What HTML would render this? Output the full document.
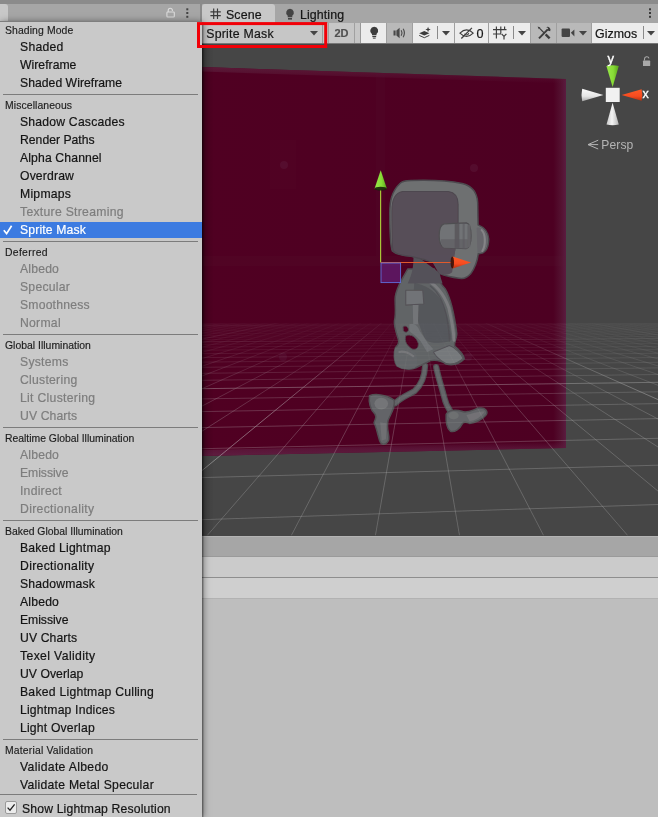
<!DOCTYPE html>
<html><head><meta charset="utf-8"><title>Scene View Draw Mode</title>
<style>
html,body{margin:0;padding:0}
body{width:658px;height:817px;overflow:hidden;position:relative;background:#bebebe;font-family:"Liberation Sans",sans-serif;font-size:12px;color:#111}
div,svg{position:absolute}
.topstrip{left:0;top:0;width:658px;height:4px;background:#8b8b8b}
.tabbar{left:0;top:4px;width:658px;height:19px;background:#a6a6a6}
.ltab{left:0;top:4px;width:8px;height:18px;background:#c8c8c8;border-radius:0 3px 0 0}
.psep{left:200px;top:0;width:2px;height:22px;background:#8b8b8b}
.stab{left:202px;top:4px;width:73px;height:19px;background:#c8c8c8;border-radius:3px 3px 0 0}
.tabtxt{-webkit-text-stroke:.2px;top:5px;font-size:12.4px;line-height:16px;letter-spacing:.1px;color:#151515;white-space:nowrap}
.toolbar{left:202px;top:23px;width:456px;height:21px;background:#c6c6c6;border-bottom:1px solid #777;box-sizing:border-box}
.btn{top:23px;height:20px;box-sizing:border-box;border-right:1px solid #a0a0a0}
.on{background:#ececec}.off{background:#b9b9b9}.nm{background:#c6c6c6}
.scene{left:202px;top:44px;width:456px;height:492px;background:#464646}
.b1{left:202px;top:536px;width:456px;height:21px;background:#a6a6a6;border-top:1px solid #b4b4b4;border-bottom:1px solid #9a9a9a;box-sizing:border-box}
.b2{left:202px;top:557px;width:456px;height:20px;background:#cbcbcb;border-bottom:1px solid #8e8e8e}
.b3{left:202px;top:578px;width:456px;height:21px;background:#cfcfcf;border-bottom:1px solid #b2b2b2;box-sizing:border-box}
.menu{left:0;top:21px;width:202px;height:796px;background:#c9c9c9;box-shadow:1px 1px 7px rgba(0,0,0,.5);border-top:1px solid #7e7e7e;box-sizing:border-box}
.hd{-webkit-text-stroke:.15px;left:5px;height:15px;line-height:18px;font-size:10.4px;letter-spacing:.05px;color:#1c1c1c;white-space:nowrap}
.it{-webkit-text-stroke:.2px;left:20px;height:18px;line-height:21px;font-size:12.2px;letter-spacing:.15px;color:#141414;white-space:nowrap}
.dis{color:#7d7d7d}
.sel{color:#fff}
.hl{left:0;width:202px;height:16px;background:#3c7be1}
.ck{left:3px}
.sep{left:3px;width:195px;height:1px;background:#7c7c7c}
.cb{left:5px;width:12px;height:13px;background:#ececec;border:1px solid #9a9a9a;border-radius:2px;box-sizing:border-box}
.cb svg{left:-1px;top:-1px}
.mj{stroke-opacity:.7}
.red{left:197px;top:21.5px;width:130.5px;height:26.5px;border:3px solid #f10008;box-sizing:border-box}
</style></head>
<body><div id="root" style="left:0;top:0;width:658px;height:817px;will-change:transform">
<div class="topstrip"></div>
<div class="tabbar"></div>
<div class="ltab"></div>
<div class="psep"></div>
<!-- left panel lock + dots -->
<svg style="left:165px;top:7px" width="30" height="12" viewBox="0 0 30 12">
 <path d="M3.2 5 V3.4 a2.1 2.1 0 0 1 4.2 0 V3.9" fill="none" stroke="#dcdcdc" stroke-width="1.1"/>
 <rect x="1.9" y="5" width="7.4" height="5" rx=".8" fill="none" stroke="#dcdcdc" stroke-width="1.1"/>
 <rect x="21.300" y="1.300" width="2" height="2" fill="#444"/><rect x="21.300" y="5" width="2" height="2" fill="#444"/><rect x="21.300" y="8.800" width="2" height="2" fill="#444"/>
</svg>
<div class="stab"></div>
<svg style="left:209px;top:7px" width="14" height="14" viewBox="209 7 14 14"><path d="M210.4 11.800 H220.8 M210.4 15.600 H220.8 M213.700 8.500 V18.900 M217.500 8.500 V18.900" stroke="#3a3a3a" stroke-width="1.15" fill="none"/></svg>
<div class="tabtxt" style="left:226px;top:7px">Scene</div>
<svg style="left:285px;top:8px" width="10" height="13" viewBox="0 0 10 13"><path d="M5 .8 a3.9 3.9 0 0 1 2.3 7 V9.3 H2.7 V7.8 A3.9 3.9 0 0 1 5 .8 Z" fill="#444"/><rect x="3" y="10" width="4" height="1.6" fill="#444"/></svg>
<div class="tabtxt" style="left:300px;top:7px">Lighting</div>
<svg style="left:647px;top:7px" width="6" height="12" viewBox="0 0 6 12"><rect x="2" y="1.300" width="2" height="2" fill="#3a3a3a"/><rect x="2" y="5" width="2" height="2" fill="#3a3a3a"/><rect x="2" y="8.800" width="2" height="2" fill="#3a3a3a"/></svg>

<div class="toolbar"></div>
<!-- draw mode dropdown -->
<div class="btn nm" style="left:202px;width:125px"></div>
<div class="tabtxt" style="left:206.2px;top:26px;font-size:12.3px;letter-spacing:.25px">Sprite Mask</div>
<svg style="left:309px;top:30px" width="10" height="7" viewBox="0 0 10 7"><path d="M1 1 H9 L5 5.6 Z" fill="#444"/></svg>
<div style="left:322px;top:24px;width:1px;height:19px;background:#9c9c9c"></div>
<div class="btn nm" style="left:328px;width:27px;border-left:1px solid #a0a0a0"></div>
<div class="tabtxt" style="left:334.500px;top:25px;font-size:11px;font-weight:bold;color:#505050;letter-spacing:0">2D</div>
<div class="btn nm" style="left:355px;width:6px;border-right:1px solid #999"></div>
<div class="btn on" style="left:361px;width:26px"></div>
<svg style="left:368.500px;top:26px" width="10.5" height="14" viewBox="0 0 12 16"><path d="M6 1 a4.4 4.4 0 0 1 2.6 8 V10.6 H3.4 V9 A4.4 4.4 0 0 1 6 1 Z" fill="#3c3c3c"/><rect x="3.8" y="11.4" width="4.4" height="1.3" fill="#3c3c3c"/><rect x="4.4" y="13.3" width="3.2" height="1.1" fill="#3c3c3c"/></svg>
<div class="btn off" style="left:387px;width:26px"></div>
<svg style="left:392px;top:26px" width="16" height="14" viewBox="0 0 16 14"><path d="M1.5 4.6 H3.6 V9.4 H1.5 Z M4.4 4.4 L7.6 1.8 V12.2 L4.4 9.6 Z" fill="#484848"/><path d="M9.2 4.3 Q10.8 7 9.2 9.7 M11.2 2.8 Q13.6 7 11.2 11.2" fill="none" stroke="#505050" stroke-width="1.2"/></svg>
<div class="btn on" style="left:413px;width:42px"></div>
<svg style="left:418px;top:26px" width="14.6" height="13" viewBox="0 0 18 16"><path d="M1.5 8.8 L7.8 6 L14 8.8 L7.8 11.6 Z" fill="#3c3c3c"/><path d="M1.5 11.6 L7.8 14.4 L14 11.6" fill="none" stroke="#3c3c3c" stroke-width="1.2"/><path d="M12.4 1 L13.3 3.5 L15.8 4.4 L13.3 5.3 L12.4 7.8 L11.5 5.3 L9 4.4 L11.5 3.5 Z" fill="#3c3c3c"/></svg>
<div style="left:437px;top:26px;width:1px;height:13px;background:#8a8a8a"></div>
<svg style="left:440.500px;top:30px" width="10" height="7" viewBox="0 0 10 7"><path d="M1 1 H9 L5 5.6 Z" fill="#444"/></svg>
<div class="btn on" style="left:455px;width:34px"></div>
<svg style="left:459px;top:27px" width="16" height="12.400" viewBox="0 0 18 14"><path d="M1 7 Q8.5 -0.5 16 7 Q8.5 14.5 1 7 Z" fill="none" stroke="#3c3c3c" stroke-width="1.25"/><path d="M6.2 7.6 A2.6 2.6 0 0 0 11 7" fill="none" stroke="#3c3c3c" stroke-width="1.2"/><path d="M2.6 13 L14.6 1" stroke="#3c3c3c" stroke-width="1.4"/></svg>
<div class="tabtxt" style="left:476.500px;top:26px;font-size:12.6px">0</div>
<div class="btn on" style="left:489px;width:42px"></div>
<svg style="left:492px;top:25px" width="17" height="16" viewBox="0 0 17 16"><path d="M1 4.6 H14.5 M1 9 H9 M4.4 1.5 V13.5 M8.8 1.5 V8.5 M12.6 1.5 V5" stroke="#3c3c3c" stroke-width="1.15" fill="none"/><path d="M9.6 8.8 L12 11.4 L14.4 8.8 M12 11.4 V14.6" stroke="#3c3c3c" stroke-width="1.2" fill="none"/></svg>
<div style="left:513px;top:26px;width:1px;height:13px;background:#8a8a8a"></div>
<svg style="left:516.500px;top:30px" width="10" height="7" viewBox="0 0 10 7"><path d="M1 1 H9 L5 5.6 Z" fill="#444"/></svg>
<div class="btn off" style="left:531px;width:26px"></div>
<svg style="left:536px;top:25px" width="17" height="16" viewBox="0 0 17 16"><path d="M3 13.4 L11.8 4.4" stroke="#3c3c3c" stroke-width="2"/><path d="M10.2 2.200 a3 3 0 0 1 4 4 l-1.800 -0.400 l-0.900 -0.900 l0.600 -1.900 Z" fill="#3c3c3c"/><path d="M3.400 3.200 L8.200 8" stroke="#3c3c3c" stroke-width="1.1"/><path d="M9.600 9.400 L13.600 13.400" stroke="#3c3c3c" stroke-width="2.3"/><path d="M1.600 1.400 L4.400 2.600 L2.800 4.200 Z" fill="#3c3c3c"/></svg>
<div class="btn off" style="left:557px;width:35px"></div>
<svg style="left:561px;top:27px" width="15" height="12" viewBox="0 0 15 12"><rect x=".6" y="1.6" width="8.4" height="8.4" rx="1" fill="#444"/><path d="M9.8 5.8 L13.4 2.4 V9.4 Z" fill="#444"/></svg>
<svg style="left:578px;top:30px" width="10" height="7" viewBox="0 0 10 7"><path d="M1 1 H9 L5 5.6 Z" fill="#444"/></svg>
<div class="btn on" style="left:592px;width:66px;border-right:0"></div>
<div class="tabtxt" style="left:595px;top:26px;font-size:12.4px;letter-spacing:.05px">Gizmos</div>
<div style="left:643px;top:26px;width:1px;height:13px;background:#8a8a8a"></div>
<svg style="left:646px;top:30px" width="10" height="7" viewBox="0 0 10 7"><path d="M1 1 H9 L5 5.6 Z" fill="#444"/></svg>

<div class="scene"></div>
<svg style="left:0;top:0" width="658" height="817" viewBox="0 0 658 817">
<defs>
 <clipPath id="sc"><rect x="202" y="44" width="456" height="491.5"/></clipPath>
 <linearGradient id="gfade" x1="0" y1="322.5" x2="0" y2="422.5" gradientUnits="userSpaceOnUse">
  <stop offset="0" stop-color="#fff" stop-opacity="0"/><stop offset=".015" stop-color="#fff" stop-opacity=".15"/><stop offset=".22" stop-color="#fff" stop-opacity=".25"/><stop offset=".6" stop-color="#fff" stop-opacity=".7"/><stop offset="1" stop-color="#fff" stop-opacity="1"/>
 </linearGradient>
 <mask id="gm" maskUnits="userSpaceOnUse" x="202" y="44" width="456" height="492"><rect x="202" y="300" width="456" height="236" fill="url(#gfade)"/></mask>
 <linearGradient id="qedge" x1="0" y1="0" x2="1" y2="0"><stop offset="0" stop-color="#500022"/><stop offset=".965" stop-color="#4d0022"/><stop offset=".985" stop-color="#53102f"/><stop offset="1" stop-color="#5a1c40"/></linearGradient>
 <linearGradient id="qtop" x1="0" y1="0" x2="0" y2="1"><stop offset="0" stop-color="#5a1a38" stop-opacity="1"/><stop offset="1" stop-color="#5a1a38" stop-opacity="0"/></linearGradient>
 <linearGradient id="qbot" x1="0" y1="0" x2="0" y2="1"><stop offset="0" stop-color="#5e1d40" stop-opacity="0"/><stop offset=".5" stop-color="#5e1d40" stop-opacity=".7"/><stop offset="1" stop-color="#5e1d40" stop-opacity="1"/></linearGradient>
 <linearGradient id="lsh" x1="202" y1="0" x2="214" y2="0" gradientUnits="userSpaceOnUse"><stop offset="0" stop-color="#000" stop-opacity=".22"/><stop offset=".3" stop-color="#000" stop-opacity=".08"/><stop offset="1" stop-color="#000" stop-opacity="0"/></linearGradient>
 <filter id="bl" x="-10%" y="-10%" width="120%" height="120%"><feGaussianBlur stdDeviation=".7"/></filter>
 <filter id="bl2" x="-10%" y="-10%" width="120%" height="120%"><feGaussianBlur stdDeviation=".9"/></filter>
 <linearGradient id="cw" x1="0" y1="0" x2="0" y2="1"><stop offset="0" stop-color="#fafafa"/><stop offset=".6" stop-color="#e6e6e6"/><stop offset="1" stop-color="#a8a8a8"/></linearGradient>
 <linearGradient id="cw2" x1="0" y1="0" x2="1" y2="0"><stop offset="0" stop-color="#c8c8c8"/><stop offset=".45" stop-color="#f4f4f4"/><stop offset="1" stop-color="#b4b4b4"/></linearGradient>
 <linearGradient id="cg" x1="0" y1="0" x2="1" y2="0"><stop offset="0" stop-color="#98e84a"/><stop offset=".55" stop-color="#88dc36"/><stop offset="1" stop-color="#5aa61c"/></linearGradient>
 <linearGradient id="cr" x1="0" y1="0" x2="0" y2="1"><stop offset="0" stop-color="#ff5a26"/><stop offset=".6" stop-color="#f64c20"/><stop offset="1" stop-color="#b83010"/></linearGradient>
</defs>
<g clip-path="url(#sc)">
 <!-- sprite mask quad -->
 <polygon points="202,67 566,79 566,448 202,456" fill="url(#qedge)"/>
 <polygon points="202,67 566,79 566,83.5 202,71.5" fill="url(#qtop)"/>
 <polygon points="202,450 566,442 566,448 202,456" fill="url(#qbot)"/>
 <!-- faint ghost marks -->
 <rect x="376" y="74" width="9" height="182" fill="#5d1f3c" opacity=".1"/>
 
 <rect x="202" y="256" width="364" height="10" fill="#5d1f3c" opacity=".12"/>
 <rect x="270" y="140" width="26" height="49" fill="#5d1f3c" opacity=".07"/>
 <circle cx="284" cy="165" r="4" fill="#64284a" opacity=".3"/><circle cx="474" cy="168" r="4" fill="#64284a" opacity=".3"/>
 <circle cx="283" cy="357" r="4" fill="#64284a" opacity=".25"/><circle cx="468" cy="357" r="4" fill="#64284a" opacity=".25"/>
 <!-- grid (under robot) -->
 <g mask="url(#gm)" opacity=".7"><g id="gridg" stroke="#c8c8c8" stroke-opacity=".37" stroke-width=".75" fill="none" class="grid">
 <line x1="206.7" y1="307.0" x2="202.0" y2="307.3" class="mj"/><line x1="211.6" y1="307.0" x2="202.0" y2="307.7"/><line x1="216.4" y1="307.0" x2="202.0" y2="308.0"/><line x1="221.3" y1="307.0" x2="202.0" y2="308.4"/><line x1="226.2" y1="307.0" x2="202.0" y2="308.8"/><line x1="231.0" y1="307.0" x2="202.0" y2="309.2"/><line x1="235.9" y1="307.0" x2="202.0" y2="309.6"/><line x1="240.7" y1="307.0" x2="202.0" y2="310.1"/><line x1="245.6" y1="307.0" x2="202.0" y2="310.5"/><line x1="250.4" y1="307.0" x2="202.0" y2="311.0"/><line x1="255.3" y1="307.0" x2="202.0" y2="311.6" class="mj"/><line x1="260.1" y1="307.0" x2="202.0" y2="312.2"/><line x1="265.0" y1="307.0" x2="202.0" y2="312.8"/><line x1="269.9" y1="307.0" x2="202.0" y2="313.4"/><line x1="274.7" y1="307.0" x2="202.0" y2="314.1"/><line x1="279.6" y1="307.0" x2="202.0" y2="314.8"/><line x1="284.4" y1="307.0" x2="202.0" y2="315.6"/><line x1="289.3" y1="307.0" x2="202.0" y2="316.5"/><line x1="294.1" y1="307.0" x2="202.0" y2="317.4"/><line x1="299.0" y1="307.0" x2="202.0" y2="318.4"/><line x1="303.9" y1="307.0" x2="202.0" y2="319.5" class="mj"/><line x1="308.7" y1="307.0" x2="202.0" y2="320.7"/><line x1="313.6" y1="307.0" x2="202.0" y2="322.0"/><line x1="318.4" y1="307.0" x2="202.0" y2="323.4"/><line x1="323.3" y1="307.0" x2="202.0" y2="324.9"/><line x1="328.1" y1="307.0" x2="202.0" y2="326.6"/><line x1="333.0" y1="307.0" x2="202.0" y2="328.6"/><line x1="337.8" y1="307.0" x2="202.0" y2="330.7"/><line x1="342.7" y1="307.0" x2="202.0" y2="333.2"/><line x1="347.6" y1="307.0" x2="202.0" y2="335.9"/><line x1="352.4" y1="307.0" x2="202.0" y2="339.1" class="mj"/><line x1="357.3" y1="307.0" x2="202.0" y2="342.8"/><line x1="362.1" y1="307.0" x2="202.0" y2="347.1"/><line x1="367.0" y1="307.0" x2="202.0" y2="352.3"/><line x1="371.8" y1="307.0" x2="202.0" y2="358.5"/><line x1="376.7" y1="307.0" x2="202.0" y2="366.2"/><line x1="381.5" y1="307.0" x2="202.0" y2="376.0"/><line x1="386.4" y1="307.0" x2="202.0" y2="388.7"/><line x1="391.3" y1="307.0" x2="202.0" y2="406.1"/><line x1="396.1" y1="307.0" x2="202.0" y2="431.2"/><line x1="401.0" y1="307.0" x2="202.0" y2="470.6" class="mj"/><line x1="405.8" y1="307.0" x2="207.2" y2="535.5"/><line x1="410.7" y1="307.0" x2="291.3" y2="535.5"/><line x1="415.5" y1="307.0" x2="375.4" y2="535.5"/><line x1="420.4" y1="307.0" x2="459.5" y2="535.5"/><line x1="425.3" y1="307.0" x2="543.6" y2="535.5"/><line x1="430.1" y1="307.0" x2="627.7" y2="535.5"/><line x1="435.0" y1="307.0" x2="658.0" y2="491.1"/><line x1="439.8" y1="307.0" x2="658.0" y2="447.0"/><line x1="444.7" y1="307.0" x2="658.0" y2="419.0"/><line x1="449.5" y1="307.0" x2="658.0" y2="399.6" class="mj"/><line x1="454.4" y1="307.0" x2="658.0" y2="385.3"/><line x1="459.2" y1="307.0" x2="658.0" y2="374.5"/><line x1="464.1" y1="307.0" x2="658.0" y2="365.9"/><line x1="469.0" y1="307.0" x2="658.0" y2="358.9"/><line x1="473.8" y1="307.0" x2="658.0" y2="353.2"/><line x1="478.7" y1="307.0" x2="658.0" y2="348.4"/><line x1="483.5" y1="307.0" x2="658.0" y2="344.3"/><line x1="488.4" y1="307.0" x2="658.0" y2="340.7"/><line x1="493.2" y1="307.0" x2="658.0" y2="337.7"/><line x1="498.1" y1="307.0" x2="658.0" y2="335.0" class="mj"/><line x1="502.9" y1="307.0" x2="658.0" y2="332.6"/><line x1="507.8" y1="307.0" x2="658.0" y2="330.4"/><line x1="512.7" y1="307.0" x2="658.0" y2="328.5"/><line x1="517.5" y1="307.0" x2="658.0" y2="326.8"/><line x1="522.4" y1="307.0" x2="658.0" y2="325.2"/><line x1="527.2" y1="307.0" x2="658.0" y2="323.8"/><line x1="532.1" y1="307.0" x2="658.0" y2="322.5"/><line x1="536.9" y1="307.0" x2="658.0" y2="321.2"/><line x1="541.8" y1="307.0" x2="658.0" y2="320.1"/><line x1="546.7" y1="307.0" x2="658.0" y2="319.1" class="mj"/><line x1="551.5" y1="307.0" x2="658.0" y2="318.2"/><line x1="556.4" y1="307.0" x2="658.0" y2="317.3"/><line x1="561.2" y1="307.0" x2="658.0" y2="316.5"/><line x1="566.1" y1="307.0" x2="658.0" y2="315.7"/><line x1="570.9" y1="307.0" x2="658.0" y2="315.0"/><line x1="575.8" y1="307.0" x2="658.0" y2="314.3"/><line x1="580.6" y1="307.0" x2="658.0" y2="313.7"/><line x1="585.5" y1="307.0" x2="658.0" y2="313.1"/><line x1="590.4" y1="307.0" x2="658.0" y2="312.5"/><line x1="595.2" y1="307.0" x2="658.0" y2="312.0" class="mj"/><line x1="600.1" y1="307.0" x2="658.0" y2="311.5"/><line x1="604.9" y1="307.0" x2="658.0" y2="311.0"/><line x1="609.8" y1="307.0" x2="658.0" y2="310.5"/><line x1="614.6" y1="307.0" x2="658.0" y2="310.1"/><line x1="619.5" y1="307.0" x2="658.0" y2="309.7"/><line x1="624.3" y1="307.0" x2="658.0" y2="309.3"/><line x1="629.2" y1="307.0" x2="658.0" y2="308.9"/><line x1="634.1" y1="307.0" x2="658.0" y2="308.6"/><line x1="638.9" y1="307.0" x2="658.0" y2="308.2"/><line x1="643.8" y1="307.0" x2="658.0" y2="307.9" class="mj"/><line x1="648.6" y1="307.0" x2="658.0" y2="307.6"/><line x1="653.5" y1="307.0" x2="658.0" y2="307.3"/><line x1="202.0" y1="519.7" x2="658.0" y2="504.5"/><line x1="202.0" y1="477.6" x2="658.0" y2="465.2"/><line x1="202.0" y1="448.7" x2="658.0" y2="438.3"/><line x1="202.0" y1="427.6" x2="658.0" y2="418.6"/><line x1="202.0" y1="411.6" x2="658.0" y2="403.6"/><line x1="202.0" y1="398.9" x2="658.0" y2="391.8"/><line x1="202.0" y1="388.7" x2="658.0" y2="382.3" class="mj"/><line x1="202.0" y1="380.3" x2="658.0" y2="374.5"/><line x1="202.0" y1="373.3" x2="658.0" y2="367.9"/><line x1="202.0" y1="367.3" x2="658.0" y2="362.3"/><line x1="202.0" y1="362.1" x2="658.0" y2="357.5"/><line x1="202.0" y1="357.6" x2="658.0" y2="353.3"/><line x1="202.0" y1="353.7" x2="658.0" y2="349.6"/><line x1="202.0" y1="350.2" x2="658.0" y2="346.4"/><line x1="202.0" y1="347.1" x2="658.0" y2="343.5"/><line x1="202.0" y1="344.3" x2="658.0" y2="340.9"/><line x1="202.0" y1="341.8" x2="658.0" y2="338.5" class="mj"/><line x1="202.0" y1="339.5" x2="658.0" y2="336.4"/><line x1="202.0" y1="337.4" x2="658.0" y2="334.4"/><line x1="202.0" y1="335.5" x2="658.0" y2="332.7"/><line x1="202.0" y1="333.8" x2="658.0" y2="331.0"/><line x1="202.0" y1="332.2" x2="658.0" y2="329.5"/><line x1="202.0" y1="330.7" x2="658.0" y2="328.2"/><line x1="202.0" y1="329.3" x2="658.0" y2="326.9"/><line x1="202.0" y1="328.0" x2="658.0" y2="325.7"/><line x1="202.0" y1="326.8" x2="658.0" y2="324.6"/><line x1="202.0" y1="325.7" x2="658.0" y2="323.5" class="mj"/><line x1="202.0" y1="324.7" x2="658.0" y2="322.6"/><line x1="202.0" y1="323.7" x2="658.0" y2="321.6"/><line x1="202.0" y1="322.8" x2="658.0" y2="320.8"/><line x1="202.0" y1="321.9" x2="658.0" y2="320.0"/><line x1="202.0" y1="321.1" x2="658.0" y2="319.2"/><line x1="202.0" y1="320.3" x2="658.0" y2="318.5"/><line x1="202.0" y1="319.6" x2="658.0" y2="317.8"/><line x1="202.0" y1="318.9" x2="658.0" y2="317.2"/><line x1="202.0" y1="318.2" x2="658.0" y2="316.6"/><line x1="202.0" y1="317.6" x2="658.0" y2="316.0" class="mj"/><line x1="202.0" y1="317.0" x2="658.0" y2="315.4"/><line x1="202.0" y1="316.5" x2="658.0" y2="314.9"/><line x1="202.0" y1="315.9" x2="658.0" y2="314.4"/><line x1="202.0" y1="315.4" x2="658.0" y2="313.9"/><line x1="202.0" y1="314.9" x2="658.0" y2="313.4"/><line x1="202.0" y1="314.4" x2="658.0" y2="313.0"/><line x1="202.0" y1="314.0" x2="658.0" y2="312.6"/><line x1="202.0" y1="313.6" x2="658.0" y2="312.2"/><line x1="202.0" y1="313.1" x2="658.0" y2="311.8"/><line x1="202.0" y1="312.7" x2="658.0" y2="311.4" class="mj"/><line x1="202.0" y1="312.4" x2="658.0" y2="311.1"/><line x1="202.0" y1="312.0" x2="658.0" y2="310.7"/><line x1="202.0" y1="311.6" x2="658.0" y2="310.4"/><line x1="202.0" y1="311.3" x2="658.0" y2="310.1"/><line x1="202.0" y1="311.0" x2="658.0" y2="309.7"/><line x1="202.0" y1="310.6" x2="658.0" y2="309.5"/><line x1="202.0" y1="310.3" x2="658.0" y2="309.2"/><line x1="202.0" y1="310.0" x2="658.0" y2="308.9"/><line x1="202.0" y1="309.7" x2="658.0" y2="308.6"/><line x1="202.0" y1="309.5" x2="658.0" y2="308.4" class="mj"/><line x1="202.0" y1="309.2" x2="658.0" y2="308.1"/><line x1="202.0" y1="308.9" x2="658.0" y2="307.9"/><line x1="202.0" y1="308.7" x2="658.0" y2="307.6"/>
 </g></g>
 <g filter="url(#bl)" opacity=".95" stroke-linejoin="round" stroke-linecap="round">
 <!-- legs & feet: coords from zoom [360,350,500,460] -->
 <g transform="translate(360,350) scale(0.21277)">
  <path d="M306,75 C304,120 292,160 258,192 C225,212 192,222 166,250" fill="none" stroke="#525457" stroke-width="29"/>
  <path d="M306,75 C304,120 292,160 258,192 C225,212 192,222 166,250" fill="none" stroke="#656b6c" stroke-width="18"/>
  <path d="M358,80 C368,130 384,175 396,222 C402,252 414,272 426,290" fill="none" stroke="#525457" stroke-width="29"/>
  <path d="M358,80 C368,130 384,175 396,222 C402,252 414,272 426,290" fill="none" stroke="#656b6c" stroke-width="18"/>
  <path d="M45,215 C70,205 120,208 160,235 C168,262 150,290 132,330 C122,370 140,400 135,422 C125,448 100,450 92,425 C82,395 78,365 66,342 C70,325 82,318 70,300 C48,280 40,245 45,215 Z" fill="#656b6c" stroke="#525457" stroke-width="7"/>
  <path d="M405,302 C415,282 450,278 478,288 C505,300 535,278 560,273 C590,268 604,290 592,306 C575,328 540,342 515,345 C500,338 490,335 482,345 C470,370 445,388 425,382 C410,370 403,335 405,302 Z" fill="#656b6c" stroke="#525457" stroke-width="7"/>
  <ellipse cx="100" cy="252" rx="32" ry="28" fill="#7f8385" opacity=".7"/>
  <path d="M95,340 L125,345 L122,420 L102,425 Z" fill="#777a7d" opacity=".7"/>
  <ellipse cx="440" cy="308" rx="24" ry="18" fill="#737a7b" opacity=".7"/>
  <path d="M500,305 C530,300 560,285 585,290 C570,315 540,330 515,335 Z" fill="#7a7d80" opacity=".7"/>
 </g>
 <!-- torso: coords from zoom [360,270,500,410] -->
 <g transform="translate(360,270) scale(0.21277)">
  <path d="M225,-5 L350,-5 C352,25 365,50 400,88 C430,140 445,220 455,300 C452,330 440,345 445,358 C468,378 488,400 490,418 C470,438 440,450 405,442 C385,428 360,420 330,426 C310,440 285,445 262,460 C240,470 200,468 175,452 C158,430 158,390 166,366 C180,352 186,340 180,325 C172,300 158,260 162,238 C172,200 162,150 166,125 C172,85 195,50 205,30 Z" fill="#636a6b" stroke="#525457" stroke-width="7"/>
  <path d="M255,60 C300,70 345,90 380,140 C410,200 425,260 430,330 C400,345 340,350 310,330 C280,280 260,200 250,140 Z" fill="#575c5e"/>
  <path d="M300,40 C350,60 395,110 418,180 C432,240 440,290 442,330" fill="none" stroke="#84888a" stroke-width="14" opacity=".8"/>
  <path d="M330,75 C365,100 392,150 405,210 C415,260 420,300 420,335" fill="none" stroke="#4f5155" stroke-width="5" opacity=".7"/>
  <path d="M215,95 L295,95 L300,160 L215,165 Z" fill="#737a7b" stroke="#55575a" stroke-width="5"/>
  <path d="M248,165 L275,165 L272,255 L250,255 Z" fill="#757c7d"/>
  <path d="M232,255 C250,250 270,255 280,285 L320,345 L345,372 L315,385 L285,335 C265,305 240,300 232,285 Z" fill="#737a7b"/>
  <path d="M345,385 L420,355 C450,365 475,395 485,415 C460,438 430,445 405,440 C385,428 362,418 345,385 Z" fill="#798081" stroke="#55575a" stroke-width="5"/>
  <path d="M166,366 C200,360 240,372 262,392 C275,420 270,450 255,462 C225,470 195,465 175,452 C158,430 158,390 166,366 Z" fill="#656c6d"/>
  <path d="M185,385 C205,380 235,390 250,405" fill="none" stroke="#85898b" stroke-width="10" opacity=".6"/>
  <!-- holes -->
  <path d="M203,266 C214,258 228,268 228,282 C224,295 210,296 204,286 Z" fill="#500022" stroke="#525457" stroke-width="4"/>
  <path d="M216,308 C238,298 266,316 274,345 C277,366 260,378 244,371 C224,358 204,335 216,308 Z" fill="#500022" stroke="#525457" stroke-width="4"/>
 </g>
 <!-- head: coords from zoom [360,160,500,300] -->
 <g transform="translate(360,160) scale(0.21277)">
  <path d="M250,440 L374,530 C378,550 383,565 388,580 L224,580 C245,540 255,490 250,440 Z" fill="#55575c"/>
  <path d="M190,108 C200,98 215,97 240,96 C330,93 420,98 480,110 C530,122 551,160 553,200 L555,305 C580,315 603,335 605,372 C604,420 585,442 556,440 C552,470 542,505 520,535 C505,552 490,558 475,557 C450,555 420,548 398,542 C388,539 380,537 374,533 L345,480 L240,452 C205,450 170,445 152,428 C142,400 140,330 140,250 C140,200 145,150 190,108 Z" fill="#707677" stroke="#4e5053" stroke-width="7"/>
  <path d="M200,148 L415,148 C445,152 461,175 461,208 L461,300 L445,425 C440,450 435,468 425,478 C380,480 300,468 240,452 C190,448 160,440 154,420 C150,380 150,300 150,240 C150,190 160,155 200,148 Z" fill="#59535c" stroke="#4e4c52" stroke-width="5"/>
  <path d="M449,415 L433,528 C420,541 395,543 374,533 L338,476 L300,464 Z" fill="#59535c"/>
  <path d="M548,318 C575,312 600,340 600,375 C598,415 580,438 552,436 Z" fill="#696c70"/>
  <path d="M572,330 C590,345 592,400 575,428" fill="none" stroke="#888c8e" stroke-width="10"/>
  <!-- goggle -->
  <path d="M395,300 L500,296 C518,300 522,330 522,356 C522,385 516,410 500,416 L395,412 C378,405 372,380 372,356 C372,330 378,305 395,300 Z" fill="#737a7b" stroke="#505255" stroke-width="6"/>
  <path d="M380,372 L520,372 C518,395 512,412 500,416 L395,412 C385,408 380,392 380,372 Z" fill="#666a6d"/>
  <rect x="445" y="300" width="22" height="113" fill="#595b60" opacity=".85"/>
  <rect x="482" y="300" width="10" height="113" fill="#5e6064" opacity=".6"/>
  <rect x="505" y="303" width="14" height="108" rx="7" fill="#66696c"/>
 </g>
</g>

 <!-- grid (faint pass over robot) -->
 <g mask="url(#gm)" opacity=".32"><use href="#gridg"/></g>
 <!-- move handle -->
 <line x1="380.6" y1="262.5" x2="380.6" y2="188" stroke="#a9c437" stroke-width="1.2"/>
 <path d="M374.6 188.4 Q380.6 191 386.8 188.4 L380.7 170.2 Z" fill="url(#cg)"/>
 <ellipse cx="380.7" cy="188.700" rx="6.1" ry="1.9" fill="#18240a" opacity=".92"/>
 <line x1="380.6" y1="262.5" x2="453" y2="262.5" stroke="#e05a2c" stroke-width="1.2"/>
 <path d="M452.6 256.6 Q450.4 262.5 452.6 268.4 L471 262.5 Z" fill="url(#cr)"/>
 <ellipse cx="452.300" cy="262.5" rx="1.7" ry="5.9" fill="#3a1006" opacity=".9"/>
 <rect x="381" y="263" width="19.6" height="19.6" fill="#6a2a9a" fill-opacity=".5" stroke="#5f6fdc" stroke-width=".9"/>
<!-- orientation gizmo -->
 <rect x="605.8" y="87.8" width="13.9" height="14.2" fill="#f1f1f1"/>
 <path d="M606.4 66 Q612.6 64.600 618.8 66 L612.6 87 Z" fill="url(#cg)"/>
 <path d="M641.6 89.300 Q643 95 641.6 100.700 L621.6 95 Z" fill="url(#cr)"/>
 <path d="M582.2 88.800 Q580.800 95 582.2 101.200 L603.4 95 Z" fill="url(#cw)"/>
 <path d="M606.5 124.400 Q612.6 126 618.8 124.400 L612.6 102.800 Z" fill="url(#cw2)"/>
 <text x="610.7" y="63.200" font-family="Liberation Sans, sans-serif" font-size="13" fill="#fff" stroke="#fff" stroke-width=".35" text-anchor="middle">y</text>
 <text x="645.6" y="98.400" font-family="Liberation Sans, sans-serif" font-size="12.5" fill="#fff" stroke="#fff" stroke-width=".35" text-anchor="middle">x</text>
 <path d="M644.500 60.500 V59 a2.300 2.300 0 0 1 4.500 -0.600" fill="none" stroke="#a9a9a9" stroke-width="1.1"/>
 <rect x="643" y="60.600" width="7.200" height="5.400" rx=".6" fill="#a9a9a9"/>
 <path d="M598.2 140.200 L588 144.600 L598.2 149 M588 144.600 H598.2" fill="none" stroke="#b4b4b4" stroke-width="1"/>
 <text x="601.3" y="149" font-family="Liberation Sans, sans-serif" font-size="12.100" fill="#b4b4b4" letter-spacing=".1">Persp</text>

 <rect x="202" y="44" width="12" height="492" fill="url(#lsh)"/>
</g>
</svg>

<div class="b1"></div><div class="b2"></div><div class="b3"></div>
<div class="menu"></div>
<div style="left:202px;top:22px;width:1px;height:795px;background:rgba(0,0,0,.3)"></div><div style="left:203px;top:22px;width:1px;height:795px;background:rgba(0,0,0,.13)"></div>
<div class="hd" style="top:22px;letter-spacing:0.107px">Shading Mode</div>
<div class="it" style="top:37px;letter-spacing:0.270px">Shaded</div>
<div class="it" style="top:55px;letter-spacing:0.025px">Wireframe</div>
<div class="it" style="top:73px;letter-spacing:0.031px">Shaded Wireframe</div>
<div class="sep" style="top:94px"></div>
<div class="hd" style="top:97px;letter-spacing:0.101px">Miscellaneous</div>
<div class="it" style="top:112px;letter-spacing:0.206px">Shadow Cascades</div>
<div class="it" style="top:130px;letter-spacing:0.006px">Render Paths</div>
<div class="it" style="top:148px;letter-spacing:0.135px">Alpha Channel</div>
<div class="it" style="top:166px;letter-spacing:0.150px">Overdraw</div>
<div class="it" style="top:184px;letter-spacing:0.249px">Mipmaps</div>
<div class="it dis" style="top:202px;letter-spacing:0.289px">Texture Streaming</div>
<div class="hl" style="top:222px"></div>
<svg class="ck" style="top:225px" width="10" height="10" viewBox="0 0 10 10"><path d="M0.8 5.2 L3.6 8.6 L8.6 0.8" fill="none" stroke="#fff" stroke-width="1.7"/></svg>
<div class="it sel" style="top:220px;letter-spacing:0.150px">Sprite Mask</div>
<div class="sep" style="top:241px"></div>
<div class="hd" style="top:244px;letter-spacing:0.308px">Deferred</div>
<div class="it dis" style="top:259px;letter-spacing:0.190px">Albedo</div>
<div class="it dis" style="top:277px;letter-spacing:0.235px">Specular</div>
<div class="it dis" style="top:295px;letter-spacing:0.196px">Smoothness</div>
<div class="it dis" style="top:313px;letter-spacing:0.270px">Normal</div>
<div class="sep" style="top:334px"></div>
<div class="hd" style="top:337px;letter-spacing:0.018px">Global Illumination</div>
<div class="it dis" style="top:352px;letter-spacing:0.251px">Systems</div>
<div class="it dis" style="top:370px;letter-spacing:0.261px">Clustering</div>
<div class="it dis" style="top:388px;letter-spacing:0.304px">Lit Clustering</div>
<div class="it dis" style="top:406px;letter-spacing:0.104px">UV Charts</div>
<div class="sep" style="top:427px"></div>
<div class="hd" style="top:430px;letter-spacing:-0.005px">Realtime Global Illumination</div>
<div class="it dis" style="top:445px;letter-spacing:0.190px">Albedo</div>
<div class="it dis" style="top:463px;letter-spacing:-0.047px">Emissive</div>
<div class="it dis" style="top:481px;letter-spacing:0.235px">Indirect</div>
<div class="it dis" style="top:499px;letter-spacing:0.334px">Directionality</div>
<div class="sep" style="top:520px"></div>
<div class="hd" style="top:523px;letter-spacing:-0.002px">Baked Global Illumination</div>
<div class="it" style="top:538px;letter-spacing:0.184px">Baked Lightmap</div>
<div class="it" style="top:556px;letter-spacing:0.334px">Directionality</div>
<div class="it" style="top:574px;letter-spacing:0.192px">Shadowmask</div>
<div class="it" style="top:592px;letter-spacing:0.190px">Albedo</div>
<div class="it" style="top:610px;letter-spacing:-0.047px">Emissive</div>
<div class="it" style="top:628px;letter-spacing:0.104px">UV Charts</div>
<div class="it" style="top:646px;letter-spacing:0.381px">Texel Validity</div>
<div class="it" style="top:664px;letter-spacing:0.038px">UV Overlap</div>
<div class="it" style="top:682px;letter-spacing:0.245px">Baked Lightmap Culling</div>
<div class="it" style="top:700px;letter-spacing:0.178px">Lightmap Indices</div>
<div class="it" style="top:718px;letter-spacing:0.182px">Light Overlap</div>
<div class="sep" style="top:739px"></div>
<div class="hd" style="top:742px;letter-spacing:0.184px">Material Validation</div>
<div class="it" style="top:757px;letter-spacing:0.323px">Validate Albedo</div>
<div class="it" style="top:775px;letter-spacing:0.267px">Validate Metal Specular</div>
<div class="sep" style="top:794px;left:0;width:197px"></div>
<div class="cb" style="top:801px"><svg width="12" height="13" viewBox="0 0 12 13"><path d="M2.6 6.6 L5 9.2 L9.6 3.4" fill="none" stroke="#222" stroke-width="1.3"/></svg></div>
<div class="it" style="top:799px;left:22px;letter-spacing:0.157px">Show Lightmap Resolution</div>
<svg style="left:190px;top:15px" width="145" height="40" viewBox="190 15 145 40"><rect x="198.5" y="23.6" width="127.2" height="22.9" fill="none" stroke="#f10008" stroke-width="3"/></svg>
</div></body></html>
